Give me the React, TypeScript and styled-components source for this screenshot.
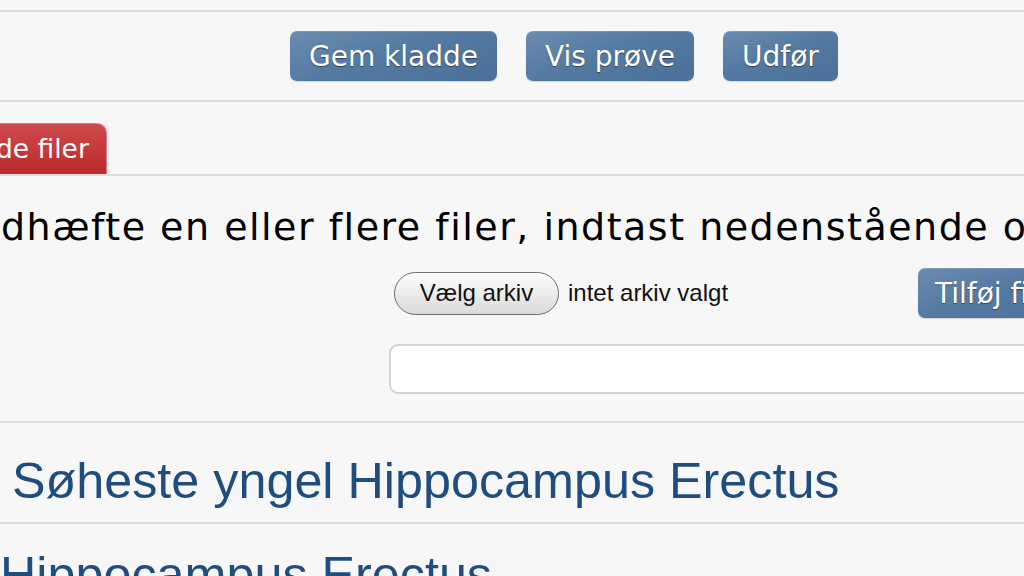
import styled, { createGlobalStyle } from 'styled-components';

const GlobalStyle = createGlobalStyle`
  html, body {
    margin: 0;
    padding: 0;
    background: #f7f7f7;
    overflow: hidden;
  }
  body {
    width: 1024px;
    height: 576px;
    font-family: "DejaVu Sans", Verdana, sans-serif;
  }
`;

const Page = styled.div`
  width: 1024px;
  height: 576px;
  overflow: hidden;
  background: #f7f7f7;
  padding-top: 10px;
  box-sizing: border-box;
`;

const Section = styled.div<{ $height: number }>`
  height: ${(p) => p.$height}px;
  border-top: 2px solid #dcdcdc;
  box-sizing: border-box;
  overflow: hidden;
`;

const ButtonRow = styled(Section)`
  display: flex;
  align-items: center;
  gap: 29px;
  padding-left: 290px;
`;

const BlueButton = styled.button`
  height: 50px;
  padding: 0 19px;
  border: none;
  border-radius: 7px;
  background: linear-gradient(160deg, #6b8cb0 0%, #557aa2 45%, #4a6f99 100%);
  box-shadow: inset 0 1px 0 rgba(255, 255, 255, 0.15), 0 1px 1px rgba(0, 0, 0, 0.15);
  color: #fff;
  font-family: "DejaVu Sans", Verdana, sans-serif;
  font-size: 28px;
  text-shadow: 0 1px 1px rgba(0, 0, 0, 0.45);
  white-space: nowrap;
  flex-shrink: 0;
`;

const TabRow = styled(Section)`
  display: flex;
  align-items: flex-end;
`;

const RedTab = styled.div`
  margin-left: -22px;
  height: 51px;
  padding: 0 17px 2px 17px;
  display: flex;
  align-items: center;
  border-radius: 10px 10px 0 0;
  background: linear-gradient(180deg, #cf4a4d 0%, #b9292d 100%);
  border: 1px solid #e07a7c;
  border-bottom: none;
  color: #fff;
  font-size: 26.5px;
  box-sizing: border-box;
`;

const Content = styled(Section)`
  display: flex;
  flex-direction: column;
`;

const Intro = styled.div`
  margin-top: 23px;
  white-space: nowrap;
  font-size: 38px;
  letter-spacing: 1.5px;
  line-height: 56px;
  color: #000;
  padding-left: 1px;
`;

const FileRow = styled.div`
  margin-top: 13px;
  height: 50px;
  display: flex;
  align-items: center;
`;

const PickButton = styled.button`
  margin-left: 394px;
  width: 165px;
  height: 43px;
  border: 1px solid #6d6d6d;
  border-radius: 22px;
  background: linear-gradient(180deg, #fdfdfd 0%, #ececec 50%, #d9d9d9 100%);
  font-family: "Liberation Sans", Arial, sans-serif;
  font-size: 24px;
  color: #111;
  flex-shrink: 0;
`;

const NoFile = styled.span`
  margin-left: 9px;
  font-family: "Liberation Sans", Arial, sans-serif;
  font-size: 24px;
  color: #111;
  white-space: nowrap;
`;

const AddButton = styled(BlueButton)`
  margin-left: auto;
  margin-right: -60px;
  width: 166px;
  text-align: left;
  padding-left: 17px;
`;

const TextField = styled.input`
  margin: 26px 0 0 389px;
  width: 700px;
  height: 50px;
  border: 2px solid #d3d3d3;
  border-radius: 9px;
  background: #fff;
  box-sizing: border-box;
`;

const TopicRow = styled(Section)`
  display: flex;
  align-items: center;
`;

const TopicTitle = styled.a<{ $indent: number; $shift?: number }>`
  padding-left: ${(p) => p.$indent}px;
  margin-top: ${(p) => p.$shift ?? 0}px;
  font-family: "Liberation Sans", Arial, sans-serif;
  font-size: 50.3px;
  color: #1f4d80;
  text-decoration: none;
  white-space: nowrap;
`;

export default function App() {
  return (
    <Page>
      <GlobalStyle />
      <ButtonRow $height={90}>
        <BlueButton>Gem kladde</BlueButton>
        <BlueButton>Vis prøve</BlueButton>
        <BlueButton>Udfør</BlueButton>
      </ButtonRow>
      <TabRow $height={74}>
        <RedTab>de filer</RedTab>
      </TabRow>
      <Content $height={247}>
        <Intro>dhæfte en eller flere filer, indtast nedenstående oplysninger</Intro>
        <FileRow>
          <PickButton>Vælg arkiv</PickButton>
          <NoFile>intet arkiv valgt</NoFile>
          <AddButton>Tilføj fil</AddButton>
        </FileRow>
        <TextField type="text" />
      </Content>
      <TopicRow $height={101}>
        <TopicTitle href="#" $indent={12} $shift={16}>Søheste yngel Hippocampus Erectus</TopicTitle>
      </TopicRow>
      <TopicRow $height={60}>
        <TopicTitle href="#" $indent={0} $shift={42}>Hippocampus Erectus</TopicTitle>
      </TopicRow>
    </Page>
  );
}
